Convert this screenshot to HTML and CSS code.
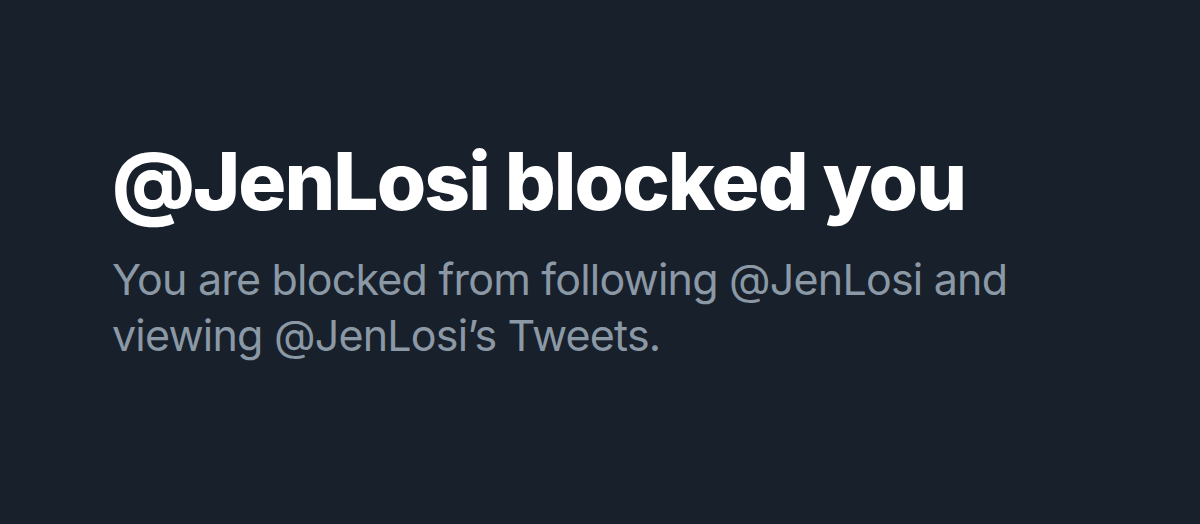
FILE: index.html
```html
<!DOCTYPE html>
<html>
	<head>
		<meta charset="UTF-8">
		<title>@JenLosi blocked you</title>
		<link rel="stylesheet" href="styles.css">
	</head>
	<body>
		<div class="blocked">
			<h1 class="title">@JenLosi blocked you</h1>
			<p class="desc">You are blocked from following @JenLosi and viewing @JenLosi’s Tweets.</p>
		</div>
	</body>
</html>
```
FILE: styles.css
```css
html, body{
	margin: 0;
	padding: 0;
	height: 100%;
	background: #18202b;
}
.blocked{
	padding: 135px 0 0 112px;
	width: 920px;
	font-family: Inter, "Noto Sans", sans-serif;
}
.title{
	margin: 0;
	color: #ffffff;
	font-size: 80px;
	font-weight: 800;
	line-height: 92px;
	letter-spacing: -1.9px;
}
.desc{
	margin: 24px 0 0 0;
	color: #8b98a5;
	font-size: 43px;
	font-weight: 400;
	line-height: 56px;
	letter-spacing: -0.8px;
}
```
